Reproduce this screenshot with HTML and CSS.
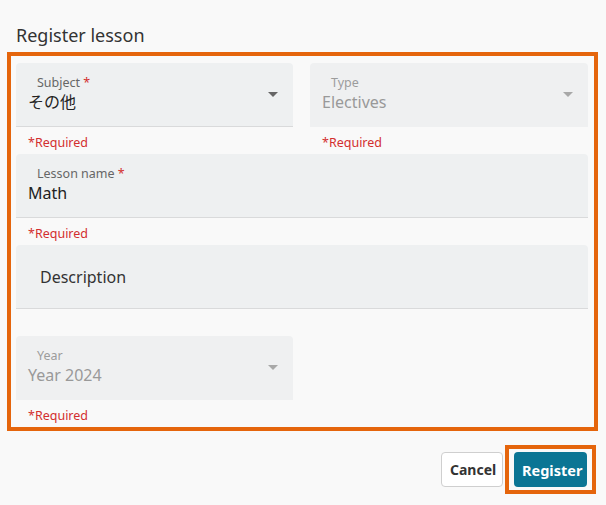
FILE: index.html
```html
<!DOCTYPE html>
<html>
  <head>
    <title>Register lesson</title>
    <link rel="stylesheet" href="styles.css">
  </head>
  <body>

    <h2 class="dialog-title">Register lesson</h2>

    <form class="lesson-form highlight">
      <div class="form-row">
        <div class="form-item">
          <div class="field">
            <div class="field-text">
              <label class="field-label">Subject <span class="req">*</span></label>
              <span class="field-value">その他</span>
            </div>
            <i class="select-arrow"></i>
          </div>
          <p class="helper">*Required</p>
        </div>
        <div class="form-item">
          <div class="field field-disabled">
            <div class="field-text">
              <label class="field-label">Type</label>
              <span class="field-value">Electives</span>
            </div>
            <i class="select-arrow"></i>
          </div>
          <p class="helper">*Required</p>
        </div>
      </div>

      <div class="form-item">
        <div class="field">
          <div class="field-text">
            <label class="field-label">Lesson name <span class="req">*</span></label>
            <span class="field-value">Math</span>
          </div>
        </div>
        <p class="helper">*Required</p>
      </div>

      <div class="form-item">
        <div class="field field-plain">
          <span class="field-placeholder">Description</span>
        </div>
        <p class="helper"></p>
      </div>

      <div class="form-row">
        <div class="form-item">
          <div class="field field-disabled">
            <div class="field-text">
              <label class="field-label">Year</label>
              <span class="field-value">Year 2024</span>
            </div>
            <i class="select-arrow"></i>
          </div>
          <p class="helper">*Required</p>
        </div>
      </div>
    </form>

    <div class="dialog-actions">
      <button class="btn btn-cancel" type="button">Cancel</button>
      <div class="highlight highlight-btn">
        <button class="btn btn-primary" type="button">Register</button>
      </div>
    </div>

  </body>
</html>
```

FILE: styles.css
```css
*,
*:before,
*:after {
  box-sizing: border-box;
}

body {
  margin: 0px;
  background: #f9f9f9;
  color: #222;
  font-family: 'Noto Sans', 'Noto Sans CJK JP', sans-serif;
}

.dialog-title {
  margin: 0px 0px 5px 16px;
  padding-top: 23px;
  font-size: 18px;
  line-height: 24px;
  font-weight: 400;
  color: #333;
}

.highlight {
  border: 4px solid #e5650c;
}

.lesson-form {
  margin: 0px 8px 0px 7px;
  padding: 7px 6px 0px 5px;
}

.form-row {
  display: grid;
  grid-template-columns: 277px 278px;
  column-gap: 17px;
}

.field {
  display: flex;
  align-items: center;
  height: 64px;
  padding-right: 15px;
  background: #eef0f1;
  border-bottom: 1px solid #d9dadb;
  border-radius: 4px 4px 0px 0px;
}
.field-disabled {
  background: #eff0f1;
  border-bottom-color: transparent;
}

.field-text {
  display: flex;
  flex-direction: column;
  flex: 1;
  align-self: flex-start;
  padding: 12px 0px 0px 12px;
}

.field-label {
  padding-left: 9px;
  font-size: 12.5px;
  line-height: 16px;
  color: #666;
}
.req {
  color: #d32f2f;
}

.field-value {
  font-size: 16px;
  line-height: 22px;
  color: #222;
}
.field-disabled .field-label {
  color: #9c9c9c;
}
.field-disabled .field-value {
  color: #999;
}

.field-placeholder {
  padding-left: 24px;
  font-size: 16px;
  color: #333;
}

.select-arrow {
  width: 0px;
  height: 0px;
  border-left: 5px solid transparent;
  border-right: 5px solid transparent;
  border-top: 5px solid #666;
}
.field-disabled .select-arrow {
  border-top-color: #a8a8a8;
}

.helper {
  height: 27px;
  margin: 0px;
  padding: 8px 0px 0px 12px;
  font-size: 12.5px;
  line-height: 16px;
  color: #d32f2f;
}

.dialog-actions {
  display: flex;
  justify-content: flex-end;
  align-items: center;
  gap: 2px;
  margin-top: 14px;
  padding-right: 10px;
}

.highlight-btn {
  padding: 3px 5px;
}

.btn {
  height: 35px;
  padding: 0px 8px;
  border-radius: 4px;
  font-family: 'Noto Sans', sans-serif;
  font-size: 14px;
  font-weight: 700;
  cursor: pointer;
}
.btn-cancel {
  width: 62px;
  background: #fff;
  border: 1px solid #cfcfcf;
  color: #333;
}
.btn-primary {
  display: block;
  width: 73px;
  background: #0b7594;
  border: 0px;
  color: #fff;
  font-size: 14.5px;
}
```
